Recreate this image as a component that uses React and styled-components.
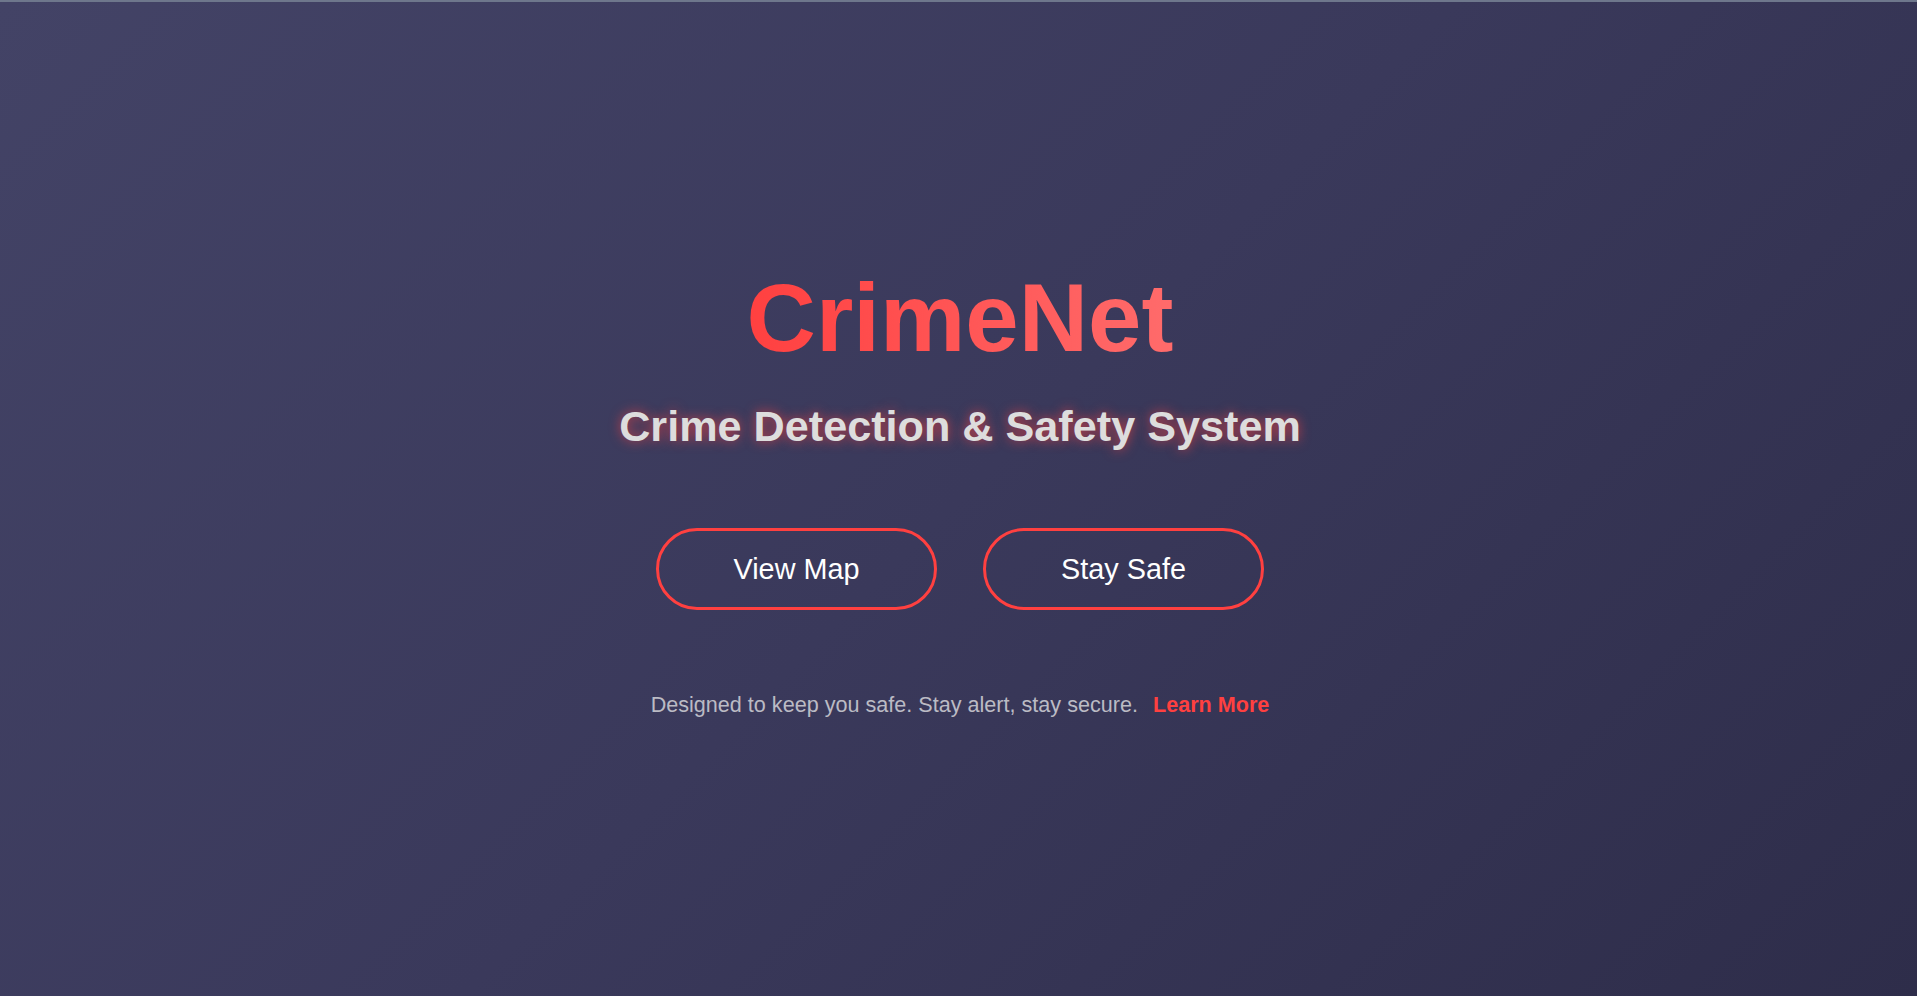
import React from "react";
import styled, { createGlobalStyle } from "styled-components";

const GlobalStyle = createGlobalStyle`
  html, body {
    margin: 0;
    padding: 0;
    height: 100%;
  }
  body {
    font-family: "Liberation Sans", Arial, sans-serif;
  }
  * { box-sizing: border-box; }
`;

const Page = styled.main`
  min-height: 996px;
  border-top: 2px solid #6e778c;
  background: linear-gradient(135deg, #434366 0%, #3a395b 50%, #2e2d4a 100%);
  display: flex;
  flex-direction: column;
  align-items: center;
  padding: 261px 0 0 3px;
`;

const Title = styled.h1`
  margin: 0;
  font-size: 96px;
  font-weight: 700;
  line-height: normal;
  background: linear-gradient(90deg, #ff4040 0%, #ff6b6b 100%);
  -webkit-background-clip: text;
  background-clip: text;
  color: transparent;
`;

const Subtitle = styled.h2`
  margin: 29px 0 0;
  font-size: 43.2px;
  font-weight: 700;
  line-height: normal;
  color: #dddddd;
  text-shadow: 0 0 12px rgba(255, 64, 64, 0.7);
`;

const ButtonRow = styled.div`
  display: flex;
  gap: 46px;
  margin-top: 77px;
`;

const PillButton = styled.button`
  width: 281px;
  height: 82px;
  border: 3px solid #ff4040;
  border-radius: 50px;
  background: transparent;
  color: #ffffff;
  font-family: "Liberation Sans", Arial, sans-serif;
  font-size: 28.8px;
  cursor: pointer;
`;

const Footer = styled.p`
  margin: 82px 0 0;
  font-size: 21.6px;
  line-height: normal;
  color: #bbbbc4;
`;

const LearnMore = styled.a`
  margin-left: 15px;
  color: #ff4040;
  font-weight: 700;
  text-decoration: none;
`;

export default function App() {
  return (
    <>
      <GlobalStyle />
      <Page>
        <Title>CrimeNet</Title>
        <Subtitle>Crime Detection &amp; Safety System</Subtitle>
        <ButtonRow>
          <PillButton>View Map</PillButton>
          <PillButton>Stay Safe</PillButton>
        </ButtonRow>
        <Footer>
          Designed to keep you safe. Stay alert, stay secure.
          <LearnMore href="#">Learn More</LearnMore>
        </Footer>
      </Page>
    </>
  );
}
